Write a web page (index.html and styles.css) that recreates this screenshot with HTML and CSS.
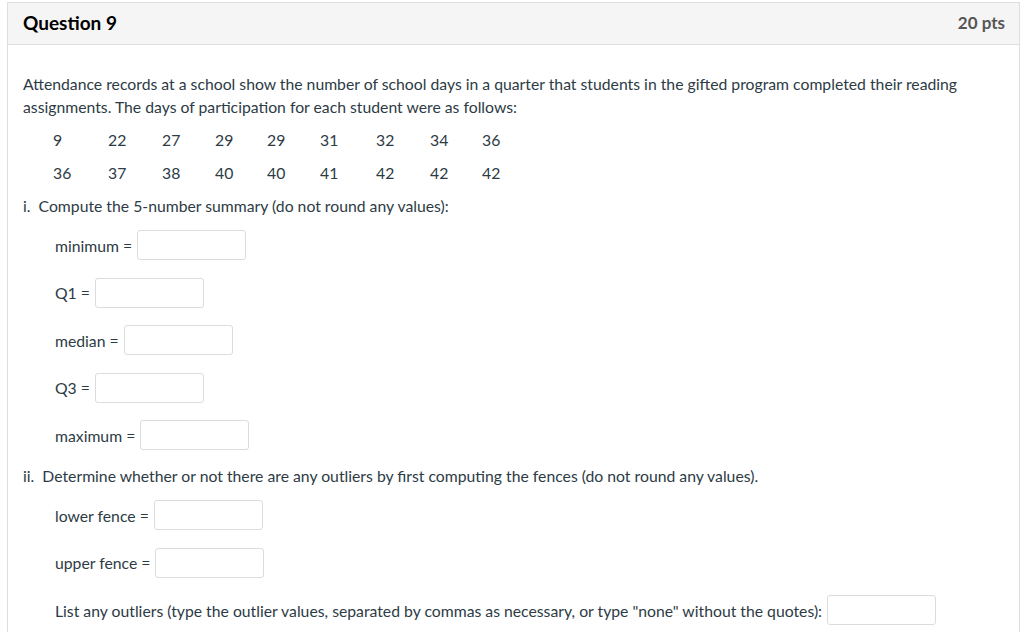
FILE: index.html
```html
<!DOCTYPE html>
<html>
<head>
<meta charset="utf-8">
<link rel="stylesheet" href="styles.css">
</head>
<body>
<div class="question">
  <div class="q-header">
    <h2 class="q-title">Question 9</h2>
    <span class="q-points">20 pts</span>
  </div>
  <div class="q-body">
    <p class="q-text">Attendance records at a school show the number of school days in a quarter that students in the gifted program completed their reading assignments. The days of participation for each student were as follows:</p>
    <div class="data">
      <div class="data-row">
        <span>9</span><span>22</span><span>27</span><span>29</span><span>29</span><span>31</span><span>32</span><span>34</span><span>36</span>
      </div>
      <div class="data-row">
        <span>36</span><span>37</span><span>38</span><span>40</span><span>40</span><span>41</span><span>42</span><span>42</span><span>42</span>
      </div>
    </div>
    <p class="part">i.&nbsp; Compute the 5-number summary (do not round any values):</p>
    <div class="field"><span class="lbl">minimum =</span><span class="box"></span></div>
    <div class="field"><span class="lbl">Q1 =</span><span class="box"></span></div>
    <div class="field"><span class="lbl">median =</span><span class="box"></span></div>
    <div class="field"><span class="lbl">Q3 =</span><span class="box"></span></div>
    <div class="field"><span class="lbl">maximum =</span><span class="box"></span></div>
    <p class="part part2">ii.&nbsp; Determine whether or not there are any outliers by first computing the fences (do not round any values).</p>
    <div class="field"><span class="lbl">lower fence =</span><span class="box"></span></div>
    <div class="field"><span class="lbl">upper fence =</span><span class="box"></span></div>
    <div class="field"><span class="lbl">List any outliers (type the outlier values, separated by commas as necessary, or type "none" without the quotes):</span><span class="box"></span></div>
  </div>
</div>
</body>
</html>
```
FILE: styles.css
```css
html, body {
  margin: 0;
  padding: 0;
  background: #fff;
}
body {
  font-family: Lato, "Noto Sans", sans-serif;
  color: #2d3b45;
  font-size: 15.75px;
}
.question {
  margin: 2px 0 0 7px;
  width: 1011px;
  border: 1px solid #dcdfe2;
  border-bottom: none;
  height: 640px;
}
.q-header {
  display: flex;
  justify-content: space-between;
  align-items: center;
  height: 41px;
  padding: 0 14px 0 15px;
  background: #f5f5f5;
  border-bottom: 1px solid #dcdfe2;
}
.q-title {
  margin: -2px 0 0 0;
  font-size: 19px;
  font-weight: 700;
  color: #000;
}
.q-points {
  margin-top: -2px;
  font-size: 17px;
  font-weight: 700;
  color: #555;
}
.q-body {
  padding: 27px 15px 0 15px;
}
.q-text {
  margin: 0;
  line-height: 23px;
  width: 960px;
}
.data {
  padding: 5px 0 0 30px;
}
.data-row {
  display: grid;
  grid-template-columns: 55px 54px 53px 52px 53px 56px 54px 52px 40px;
  height: 33px;
  align-items: center;
}
.part {
  margin: 5px 0 0 0;
  line-height: 23px;
}
.part2 {
  margin-top: 14px;
}
.field {
  display: flex;
  align-items: center;
  height: 30px;
  margin: 17.5px 0 0 32px;
}
.part + .field {
  margin-top: 13px;
}
.lbl {
  margin-right: 5px;
}
.box {
  display: inline-block;
  width: 107px;
  height: 28px;
  border: 1px solid #dcdcdc;
  border-radius: 3px;
  background: #fff;
}
```
